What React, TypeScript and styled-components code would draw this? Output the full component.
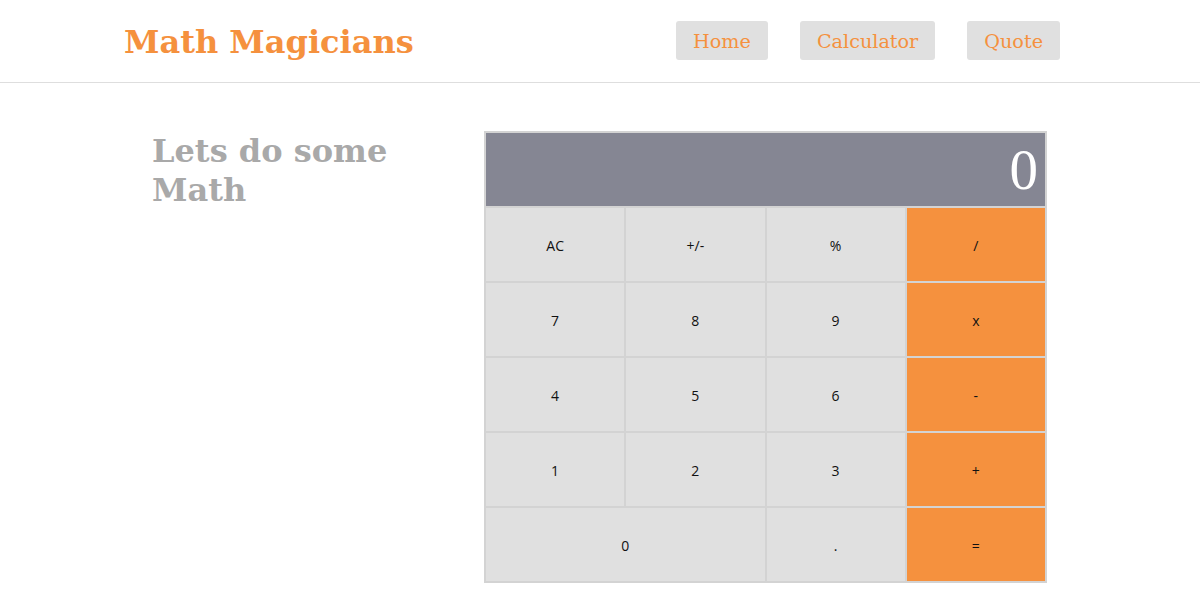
import React from 'react';
import styled, { createGlobalStyle } from 'styled-components';

const Global = createGlobalStyle`
  * { box-sizing: border-box; }
  body { margin: 0; background: #fff; font-family: "DejaVu Serif", serif; }
`;

const Header = styled.header`
  height: 83px;
  display: flex;
  align-items: center;
  justify-content: space-between;
  padding: 0 140px 0 124px;
  border-bottom: 1px solid #dedede;
`;

const Title = styled.h1`
  margin: 0;
  font-family: "DejaVu Serif", serif;
  font-size: 32px;
  font-weight: bold;
  color: #f5913e;
  position: relative;
  top: 1px;
`;

const Nav = styled.nav`
  display: flex;
  gap: 32px;
  align-self: flex-start;
  margin-top: 21px;
`;

const NavLink = styled.a`
  display: block;
  height: 39px;
  line-height: 41px;
  padding: 0 17px;
  background: #e0e0e0;
  border-radius: 3px;
  color: #f5913e;
  font-family: "DejaVu Serif", serif;
  font-size: 19.2px;
  text-decoration: none;
`;

const Main = styled.main`
  display: flex;
  align-items: flex-start;
  padding: 48px 0 0 152px;
`;

const Intro = styled.h2`
  margin: 0;
  width: 300px;
  margin-right: 32px;
  padding-top: 1px;
  font-family: "DejaVu Serif", serif;
  font-size: 32px;
  line-height: 39px;
  font-weight: bold;
  color: #a9a9a9;
`;

const Calc = styled.div`
  width: 563px;
  display: grid;
  grid-template-columns: repeat(4, 1fr);
  grid-auto-rows: 73px;
  gap: 2px;
  padding: 2px;
  background: #d3d3d3;
`;

const Display = styled.div`
  grid-column: span 4;
  background: #858693;
  color: #fff;
  font-family: "Liberation Serif", "Times New Roman", serif;
  font-size: 57px;
  display: flex;
  align-items: center;
  justify-content: flex-end;
  padding-right: 7px;
`;

const Key = styled.button<{ $accent?: boolean; $wide?: boolean }>`
  grid-column: ${(p) => (p.$wide ? 'span 2' : 'auto')};
  border: none;
  margin: 0;
  padding: 2px 0 0;
  background: ${(p) => (p.$accent ? '#f5913e' : '#e0e0e0')};
  color: #111;
  font-family: "Open Sans", sans-serif;
  font-size: 14px;
`;

const rows: { label: string; accent?: boolean; wide?: boolean }[] = [
  { label: 'AC' }, { label: '+/-' }, { label: '%' }, { label: '/', accent: true },
  { label: '7' }, { label: '8' }, { label: '9' }, { label: 'x', accent: true },
  { label: '4' }, { label: '5' }, { label: '6' }, { label: '-', accent: true },
  { label: '1' }, { label: '2' }, { label: '3' }, { label: '+', accent: true },
  { label: '0', wide: true }, { label: '.' }, { label: '=', accent: true },
];

export default function App() {
  return (
    <>
      <Global />
      <Header>
        <Title>Math Magicians</Title>
        <Nav>
          <NavLink href="#">Home</NavLink>
          <NavLink href="#">Calculator</NavLink>
          <NavLink href="#">Quote</NavLink>
        </Nav>
      </Header>
      <Main>
        <Intro>Lets do some Math</Intro>
        <Calc>
          <Display>0</Display>
          {rows.map((k, i) => (
            <Key key={i} $accent={k.accent} $wide={k.wide}>{k.label}</Key>
          ))}
        </Calc>
      </Main>
    </>
  );
}
